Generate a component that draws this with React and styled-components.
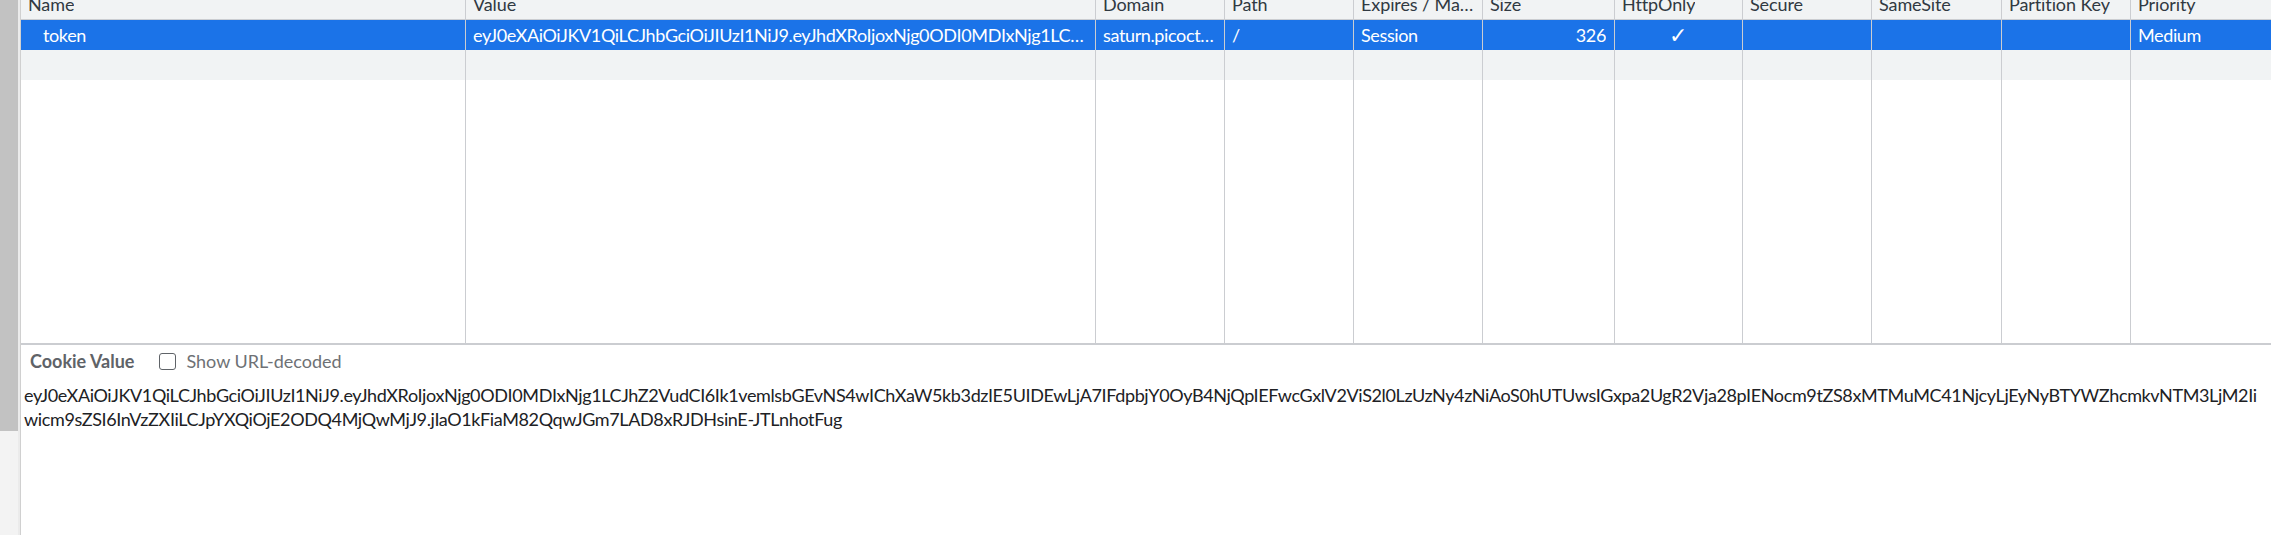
import styled, { createGlobalStyle } from "styled-components";

const GlobalStyle = createGlobalStyle`
  html, body {
    margin: 0;
    padding: 0;
    background: #ffffff;
  }
  body {
    font-family: Lato, "Open Sans", sans-serif;
    font-size: 18px;
    color: #202124;
    overflow: hidden;
  }
`;

const COLS = "445px 630px 129px 129px 129px 132px 128px 129px 130px 129px 1fr";

const Frame = styled.div`
  display: flex;
  width: 2271px;
  height: 535px;
  overflow: hidden;
`;

const SideBar = styled.div`
  width: 18px;
  display: flex;
  flex-direction: column;
  border-right: 2px solid #ebebeb;
`;

const SideThumb = styled.div`
  height: 431px;
  background: #c2c2c2;
`;

const SideTrack = styled.div`
  flex: 1;
  background: #f3f3f3;
`;

const Main = styled.div`
  flex: 1;
  display: flex;
  flex-direction: column;
  border-left: 1px solid #d0d0d0;
  min-width: 0;
`;

const Table = styled.div`
  height: 343px;
  display: flex;
  flex-direction: column;
  border-bottom: 2px solid #cbcdd1;
`;

const Row = styled.div`
  display: grid;
  grid-template-columns: ${COLS};
  height: ${(p) => p.$h}px;
  background: ${(p) => p.$bg || "#ffffff"};
  color: ${(p) => p.$color || "#202124"};
  border-bottom: ${(p) => (p.$line ? "1px solid #cbcdd1" : "none")};
  flex: ${(p) => (p.$fill ? 1 : "none")};
`;

const Cell = styled.div`
  border-right: 1px solid #cbcdd1;
  padding: 0 8px 0 ${(p) => p.$indent || 7}px;
  display: flex;
  align-items: center;
  justify-content: ${(p) => p.$align || "flex-start"};
  overflow: hidden;
  min-width: 0;
  letter-spacing: -0.37px;
  &:last-child {
    border-right: none;
  }
`;

const Ellipsis = styled.span`
  white-space: nowrap;
  overflow: hidden;
  text-overflow: ellipsis;
  min-width: 0;
`;

const Check = styled.span`
  font-size: 22px;
  line-height: 1;
`;

const HeadCell = styled(Cell)`
  align-items: flex-start;
  color: #303942;
  letter-spacing: -0.1px;
`;

const HeadText = styled(Ellipsis)`
  line-height: 30px;
  margin-top: -11px;
`;

const Panel = styled.div`
  flex: 1;
  padding: 4px 3px 0 3px;
`;

const PanelHead = styled.div`
  display: flex;
  align-items: center;
  height: 24px;
  padding-left: 6px;
`;

const PanelTitle = styled.span`
  font-weight: 700;
  color: #5f6368;
  margin-right: 25px;
`;

const CheckLabel = styled.label`
  display: flex;
  align-items: center;
  gap: 10px;
  color: #6e7175;
`;

const CheckBox = styled.span`
  width: 15px;
  height: 15px;
  border: 1.5px solid #5f6368;
  border-radius: 3px;
  background: #fff;
`;

const ValueText = styled.div`
  margin-top: 10px;
  line-height: 24px;
  word-break: break-all;
  letter-spacing: -0.37px;
  color: #202124;
`;

const headers = [
  "Name",
  "Value",
  "Domain",
  "Path",
  "Expires / Max-Age",
  "Size",
  "HttpOnly",
  "Secure",
  "SameSite",
  "Partition Key",
  "Priority",
];

const token =
  "eyJ0eXAiOiJKV1QiLCJhbGciOiJIUzI1NiJ9.eyJhdXRoIjoxNjg0ODI0MDIxNjg1LCJhZ2VudCI6Ik1vemlsbGEvNS4wIChXaW5kb3dzIE5UIDEwLjA7IFdpbjY0OyB4NjQpIEFwcGxlV2ViS2l0LzUzNy4zNiAoS0hUTUwsIGxpa2UgR2Vja28pIENocm9tZS8xMTMuMC41NjcyLjEyNyBTYWZhcmkvNTM3LjM2Iiwicm9sZSI6InVzZXIiLCJpYXQiOjE2ODQ4MjQwMjJ9.jIaO1kFiaM82QqwJGm7LAD8xRJDHsinE-JTLnhotFug";

const cookie = [
  { text: "token", indent: 22 },
  { text: token },
  { text: "saturn.picoctf.net" },
  { text: "/" },
  { text: "Session" },
  { text: "326", align: "flex-end" },
  { check: true, align: "center" },
  { text: "" },
  { text: "" },
  { text: "" },
  { text: "Medium" },
];

const App = () => {
  return (
    <Frame>
      <GlobalStyle />
      <SideBar>
        <SideThumb />
        <SideTrack />
      </SideBar>
      <Main>
        <Table>
          <Row $h={19} $bg="#f1f3f4" $line>
            {headers.map((h) => (
              <HeadCell key={h}>
                <HeadText>{h}</HeadText>
              </HeadCell>
            ))}
          </Row>
          <Row $h={30} $bg="#1b73e8" $color="#ffffff">
            {cookie.map((c, i) => (
              <Cell key={i} $indent={c.indent} $align={c.align}>
                {c.check ? <Check>✓</Check> : <Ellipsis>{c.text}</Ellipsis>}
              </Cell>
            ))}
          </Row>
          <Row $h={30} $bg="#f1f3f4">
            {headers.map((h) => (
              <Cell key={h} />
            ))}
          </Row>
          <Row $fill>
            {headers.map((h) => (
              <Cell key={h} />
            ))}
          </Row>
        </Table>
        <Panel>
          <PanelHead>
            <PanelTitle>Cookie Value</PanelTitle>
            <CheckLabel>
              <CheckBox />
              Show URL-decoded
            </CheckLabel>
          </PanelHead>
          <ValueText>{token}</ValueText>
        </Panel>
      </Main>
    </Frame>
  );
};

export default App;
